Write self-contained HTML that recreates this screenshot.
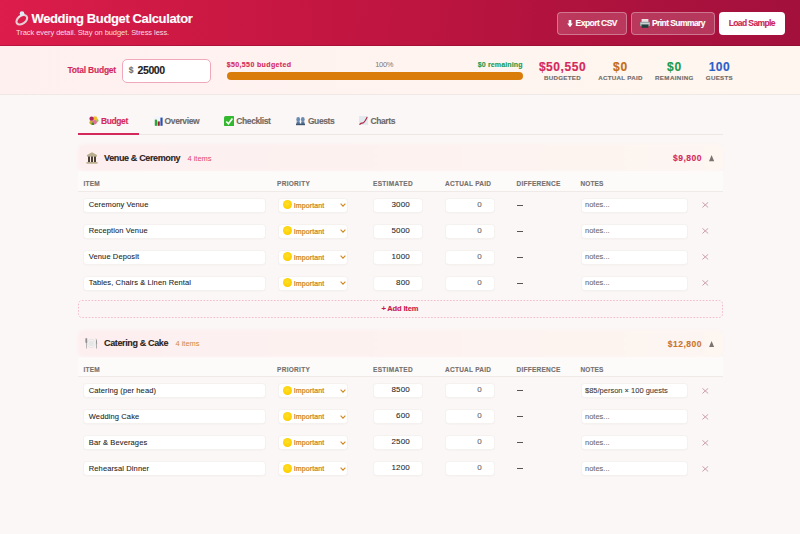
<!DOCTYPE html>
<html><head><meta charset="utf-8"><title>Wedding Budget Calculator</title>
<style>
html,body{margin:0;padding:0;}
body{width:800px;height:534px;overflow:hidden;position:relative;background:#fbf7f6;font-family:"Liberation Sans", sans-serif;}
.t{position:absolute;line-height:1;white-space:nowrap;}
.b{-webkit-text-stroke:0.12px currentColor;}
svg{display:block}
</style></head><body>
<div style="position:absolute;left:0.00px;top:0.00px;width:800.00px;height:46.00px;box-sizing:border-box;background:linear-gradient(95deg,#dd1d4b 0%,#cd1944 22%,#bf1540 48%,#b0133e 70%,#a3103c 100%);box-shadow:inset 0 -1px 0 rgba(120,10,40,0.35);"></div>
<svg style="position:absolute;left:14px;top:10px" width="16" height="16" viewBox="0 0 16 16">
<ellipse cx="7.8" cy="9.8" rx="6" ry="3.9" fill="none" stroke="#e6cdd4" stroke-width="2.1" transform="rotate(-36 7.8 9.8)"/>
<path d="M4.6 7.2 Q7 4.8 10.6 4.4" fill="none" stroke="#f5e4e8" stroke-width="1.2"/>
<circle cx="8" cy="3.6" r="2.3" fill="#dcecf6"/>
</svg>
<div class="t b" style="left:31.50px;top:12.00px;font-size:13px;font-weight:bold;color:#fff;letter-spacing:-0.37px;">Wedding Budget Calculator</div>
<div class="t" style="left:16.00px;top:28.65px;font-size:7.5px;font-weight:normal;color:rgba(255,255,255,0.85);letter-spacing:-0.07px;">Track every detail. Stay on budget. Stress less.</div>
<div style="position:absolute;left:557.00px;top:12.00px;width:70.00px;height:23.00px;box-sizing:border-box;background:rgba(255,255,255,0.16);border:1px solid rgba(255,255,255,0.32);border-radius:4px;"></div>
<svg style="position:absolute;left:566.5px;top:19.6px" width="6" height="7.4" viewBox="0 0 6 7.4"><rect x="1.7" y="0" width="2.6" height="4" fill="#fff"/><path d="M0.2 3.6 H5.8 L3 7.3 Z" fill="#fff"/></svg>
<div class="t b" style="left:575.60px;top:19.10px;font-size:8.5px;font-weight:bold;color:#fff;letter-spacing:-0.54px;">Export CSV</div>
<div style="position:absolute;left:631.00px;top:12.00px;width:84.00px;height:23.00px;box-sizing:border-box;background:rgba(255,255,255,0.16);border:1px solid rgba(255,255,255,0.32);border-radius:4px;"></div>
<svg style="position:absolute;left:640.3px;top:18.6px" width="10" height="9" viewBox="0 0 10 9"><rect x="1.6" y="0" width="6.8" height="3.6" fill="#eedfe3"/><rect x="0" y="2.8" width="10" height="4.4" rx="1" fill="#9aa6a6"/><rect x="0.6" y="4.2" width="8.8" height="0.9" fill="#d6dcdc"/><rect x="1.6" y="5.6" width="6.8" height="3.2" fill="#233c3c"/></svg>
<div class="t b" style="left:652.00px;top:19.10px;font-size:8.5px;font-weight:bold;color:#fff;letter-spacing:-0.575px;">Print Summary</div>
<div style="position:absolute;left:719.00px;top:12.00px;width:65.50px;height:22.50px;box-sizing:border-box;background:#fff;border-radius:4px;"></div>
<div class="t b" style="left:728.70px;top:19.10px;font-size:8.5px;font-weight:bold;color:#cc2456;letter-spacing:-0.6px;">Load Sample</div>
<div style="position:absolute;left:0.00px;top:46.00px;width:800.00px;height:49.00px;box-sizing:border-box;background:linear-gradient(90deg,#fff0f0 0%,#fff4f0 50%,#fff7ef 100%);border-bottom:1px solid #f0e8e5;"></div>
<div class="t b" style="left:67.40px;top:66.40px;font-size:8.5px;font-weight:bold;color:#d42a5b;letter-spacing:-0.23px;">Total Budget</div>
<div style="position:absolute;left:122.40px;top:58.50px;width:88.30px;height:24.30px;box-sizing:border-box;background:#fff;border:1px solid #efa9bb;border-radius:5px;"></div>
<div class="t b" style="left:128.80px;top:66.40px;font-size:8.5px;font-weight:bold;color:#707070;letter-spacing:0px;">$</div>
<div class="t b" style="left:137.60px;top:64.71px;font-size:10.5px;font-weight:bold;color:#222;letter-spacing:-0.44px;">25000</div>
<div class="t b" style="left:226.75px;top:61.47px;font-size:7px;font-weight:bold;color:#d42a5b;letter-spacing:0.37px;">$50,550 budgeted</div>
<div class="t" style="left:184.20px;width:400px;text-align:center;top:61.15px;font-size:7.5px;font-weight:normal;color:#7a7a7a;letter-spacing:-0.35px;">100%</div>
<div class="t b" style="right:277.30px;top:61.47px;font-size:7px;font-weight:bold;color:#1c9a4c;letter-spacing:0.15px;">$0 remaining</div>
<div style="position:absolute;left:227.00px;top:72.10px;width:295.50px;height:7.70px;box-sizing:border-box;background:#da7c0a;border-radius:4px;"></div>
<div class="t b" style="left:362.50px;width:400px;text-align:center;top:61.24px;font-size:12px;font-weight:bold;color:#d42a5b;letter-spacing:0.55px;-webkit-text-stroke:0.15px #d42a5b;">$50,550</div>
<div class="t b" style="left:362.50px;width:400px;text-align:center;top:74.75px;font-size:6.2px;font-weight:bold;color:#6f6b69;letter-spacing:0.3px;">BUDGETED</div>
<div class="t b" style="left:420.50px;width:400px;text-align:center;top:61.24px;font-size:12px;font-weight:bold;color:#c46c12;letter-spacing:0.8px;-webkit-text-stroke:0.15px #c46c12;">$0</div>
<div class="t b" style="left:420.50px;width:400px;text-align:center;top:74.75px;font-size:6.2px;font-weight:bold;color:#6f6b69;letter-spacing:0.28px;">ACTUAL PAID</div>
<div class="t b" style="left:474.40px;width:400px;text-align:center;top:61.24px;font-size:12px;font-weight:bold;color:#1c9a4c;letter-spacing:0.8px;-webkit-text-stroke:0.15px #1c9a4c;">$0</div>
<div class="t b" style="left:474.40px;width:400px;text-align:center;top:74.75px;font-size:6.2px;font-weight:bold;color:#6f6b69;letter-spacing:0.37px;">REMAINING</div>
<div class="t b" style="left:519.40px;width:400px;text-align:center;top:61.24px;font-size:12px;font-weight:bold;color:#2c5fc8;letter-spacing:0.35px;-webkit-text-stroke:0.15px #2c5fc8;">100</div>
<div class="t b" style="left:519.40px;width:400px;text-align:center;top:74.75px;font-size:6.2px;font-weight:bold;color:#6f6b69;letter-spacing:0.3px;">GUESTS</div>
<div style="position:absolute;left:78.00px;top:134.00px;width:644.50px;height:1.00px;box-sizing:border-box;background:#ede7e5;"></div>
<div style="position:absolute;left:78.00px;top:133.00px;width:61.00px;height:2.00px;box-sizing:border-box;background:#d42a5b;"></div>
<div class="t b" style="left:101.00px;top:116.80px;font-size:8.5px;font-weight:bold;color:#d42a5b;letter-spacing:-0.4px;">Budget</div>
<div class="t b" style="left:164.60px;top:116.80px;font-size:8.5px;font-weight:bold;color:#6f6a68;letter-spacing:-0.4px;">Overview</div>
<div class="t b" style="left:236.30px;top:116.80px;font-size:8.5px;font-weight:bold;color:#6f6a68;letter-spacing:-0.4px;">Checklist</div>
<div class="t b" style="left:307.90px;top:116.80px;font-size:8.5px;font-weight:bold;color:#6f6a68;letter-spacing:-0.4px;">Guests</div>
<div class="t b" style="left:370.50px;top:116.80px;font-size:8.5px;font-weight:bold;color:#6f6a68;letter-spacing:-0.4px;">Charts</div>
<svg style="position:absolute;left:89px;top:115.5px" width="9.5" height="9.5" viewBox="0 0 9.5 9.5"><circle cx="7.6" cy="4.6" r="1.9" fill="#9ccc50"/><circle cx="6" cy="2.6" r="2.3" fill="#f0c030"/><circle cx="2.6" cy="2.8" r="2.2" fill="#b02860"/><circle cx="2.4" cy="6.4" r="2" fill="#c8b030"/><circle cx="5.6" cy="6.2" r="2.2" fill="#e070a0"/><circle cx="3.8" cy="8" r="1.4" fill="#4a8a2a"/></svg>
<svg style="position:absolute;left:153.6px;top:116px" width="9" height="10" viewBox="0 0 9 10"><rect x="0" y="0.5" width="9" height="9.5" fill="#f3f5fa"/><rect x="0.8" y="3.6" width="2.2" height="6.2" fill="#2aa83a"/><rect x="3.6" y="5.4" width="2.2" height="4.4" fill="#a02030"/><rect x="6.4" y="1.6" width="2.2" height="8.2" fill="#2c50b0"/></svg>
<svg style="position:absolute;left:223.7px;top:115.6px" width="10.5" height="10.5" viewBox="0 0 10 10"><rect x="0" y="0" width="10" height="10" rx="1.6" fill="#34b830"/><path d="M2.2 5.2 L4.2 7.4 L8 2.4" fill="none" stroke="#fff" stroke-width="1.5"/></svg>
<svg style="position:absolute;left:295.9px;top:117.4px" width="9" height="8.2" viewBox="0 0 9 8.2"><ellipse cx="2.2" cy="2.6" rx="1.9" ry="2.5" fill="#6a8cb2"/><ellipse cx="6.8" cy="2.6" rx="1.9" ry="2.5" fill="#6a8cb2"/><rect x="0.6" y="4.6" width="3.2" height="3" fill="#5a7ca2"/><rect x="5.2" y="4.6" width="3.2" height="3" fill="#5a7ca2"/><rect x="0" y="6.6" width="9" height="1.6" fill="#3c5470"/></svg>
<svg style="position:absolute;left:358.9px;top:115.9px" width="9" height="9.6" viewBox="0 0 9 9.6"><rect x="0" y="0" width="9" height="9.6" fill="#e2e9ef"/><path d="M0.5 8.6 Q1.5 7 4.2 6.9 Q5.6 6.4 8.2 1" fill="none" stroke="#b02a40" stroke-width="1.1"/></svg>
<div style="position:absolute;left:78.00px;top:144.00px;width:644.50px;height:27.00px;box-sizing:border-box;background:linear-gradient(90deg,#fdeff0 0%,#fdf2f0 50%,#fdf6f1 100%);border-radius:6px;filter:blur(1px);"></div>
<svg style="position:absolute;left:85.8px;top:151.80px" width="12" height="12" viewBox="0 0 12 12"><path d="M6 0.3 L11.5 3.3 H0.5 Z" fill="#b9ad8c"/><rect x="1" y="3.3" width="10" height="1.2" fill="#a89c7c"/><rect x="2" y="4.5" width="2" height="5.5" fill="#4a3f30"/><rect x="5" y="4.5" width="2" height="5.5" fill="#4a3f30"/><rect x="8" y="4.5" width="2" height="5.5" fill="#4a3f30"/><rect x="0.5" y="10" width="11" height="1.7" fill="#b9ad8c"/></svg>
<div class="t b" style="left:104.00px;top:153.98px;font-size:9px;font-weight:bold;color:#2b2424;letter-spacing:-0.36px;">Venue &amp; Ceremony</div>
<div class="t" style="left:187.40px;top:154.65px;font-size:7.5px;font-weight:normal;color:#e0466e;letter-spacing:0px;">4 items</div>
<div class="t b" style="right:98.00px;top:154.20px;font-size:8.5px;font-weight:bold;color:#d42a5b;letter-spacing:0.5px;-webkit-text-stroke:0.1px #d42a5b;">$9,800</div>
<svg style="position:absolute;left:709.4px;top:155.40px" width="5.2" height="6.2" viewBox="0 0 5.2 6.2"><path d="M2.6 0 L5.2 6.2 H0 Z" fill="#7a7470"/></svg>
<div style="position:absolute;left:78.00px;top:171.00px;width:644.50px;height:20.50px;box-sizing:border-box;background:rgba(255,255,255,0.45);border-bottom:1px solid #efe9e7;"></div>
<div class="t b" style="left:83.60px;top:181.00px;font-size:6.5px;font-weight:bold;color:#75716f;letter-spacing:0.22px;">ITEM</div>
<div class="t b" style="left:277.00px;top:181.00px;font-size:6.5px;font-weight:bold;color:#75716f;letter-spacing:0.3px;">PRIORITY</div>
<div class="t b" style="left:373.00px;top:181.00px;font-size:6.5px;font-weight:bold;color:#75716f;letter-spacing:0.32px;">ESTIMATED</div>
<div class="t b" style="left:445.00px;top:181.00px;font-size:6.5px;font-weight:bold;color:#75716f;letter-spacing:0.26px;">ACTUAL PAID</div>
<div class="t b" style="left:516.50px;top:181.00px;font-size:6.5px;font-weight:bold;color:#75716f;letter-spacing:0.25px;">DIFFERENCE</div>
<div class="t b" style="left:580.40px;top:181.00px;font-size:6.5px;font-weight:bold;color:#75716f;letter-spacing:0.12px;">NOTES</div>
<div style="position:absolute;left:83.20px;top:197.60px;width:182.80px;height:15.20px;box-sizing:border-box;background:#fff;border:1px solid #f5f1ef;border-radius:3.5px;box-shadow:0 0.5px 0 rgba(0,0,0,0.03);"></div>
<div class="t" style="left:88.80px;top:201.25px;font-size:7.5px;font-weight:normal;color:#1e1e1e;letter-spacing:0.12px;-webkit-text-stroke:0.08px #1e1e1e;">Ceremony Venue</div>
<div style="position:absolute;left:277.60px;top:197.60px;width:70.00px;height:15.20px;box-sizing:border-box;background:#fff;border:1px solid #f5f1ef;border-radius:3.5px;box-shadow:0 0.5px 0 rgba(0,0,0,0.03);"></div>
<div style="position:absolute;left:282.7px;top:200.10px;width:9px;height:9px;border-radius:50%;background:radial-gradient(circle at 45% 40%,#ffde2a,#ffd000 65%,#eab000)"></div>
<div class="t" style="left:293.70px;top:201.67px;font-size:7px;font-weight:normal;color:#c97f14;letter-spacing:0.12px;-webkit-text-stroke:0.2px #c97f14;">Important</div>
<svg style="position:absolute;left:340px;top:203.00px" width="6" height="4" viewBox="0 0 6 4"><path d="M0.6 0.6 L3 3.2 L5.4 0.6" fill="none" stroke="#d08a20" stroke-width="1.1"/></svg>
<div style="position:absolute;left:373.40px;top:197.60px;width:49.40px;height:15.20px;box-sizing:border-box;background:#fff;border:1px solid #f5f1ef;border-radius:3.5px;box-shadow:0 0.5px 0 rgba(0,0,0,0.03);"></div>
<div class="t" style="right:390.00px;top:200.83px;font-size:8px;font-weight:normal;color:#262626;letter-spacing:0.18px;-webkit-text-stroke:0.06px #262626;">3000</div>
<div style="position:absolute;left:445.00px;top:197.60px;width:50.00px;height:15.20px;box-sizing:border-box;background:#fff;border:1px solid #f5f1ef;border-radius:3.5px;box-shadow:0 0.5px 0 rgba(0,0,0,0.03);"></div>
<div class="t" style="right:318.20px;top:200.83px;font-size:8px;font-weight:normal;color:#6c6c6c;letter-spacing:0px;-webkit-text-stroke:0.12px #6c6c6c;">0</div>
<div style="position:absolute;left:516.50px;top:204.60px;width:6.80px;height:1.00px;box-sizing:border-box;background:#555;"></div>
<div style="position:absolute;left:580.80px;top:197.60px;width:107.20px;height:15.20px;box-sizing:border-box;background:#fff;border:1px solid #f5f1ef;border-radius:3.5px;box-shadow:0 0.5px 0 rgba(0,0,0,0.03);"></div>
<div class="t" style="left:585.00px;top:201.25px;font-size:7.5px;font-weight:normal;color:#6e6a69;letter-spacing:0px;-webkit-text-stroke:0.08px #6e6a69;">notes...</div>
<svg style="position:absolute;left:702.4px;top:202.40px" width="6.6" height="5.8" viewBox="0 0 6.6 5.8"><path d="M0.4 0.3 L6.2 5.5 M6.2 0.3 L0.4 5.5" stroke="#cc9fac" stroke-width="1"/></svg>
<div style="position:absolute;left:83.20px;top:223.60px;width:182.80px;height:15.20px;box-sizing:border-box;background:#fff;border:1px solid #f5f1ef;border-radius:3.5px;box-shadow:0 0.5px 0 rgba(0,0,0,0.03);"></div>
<div class="t" style="left:88.80px;top:227.25px;font-size:7.5px;font-weight:normal;color:#1e1e1e;letter-spacing:0.12px;-webkit-text-stroke:0.08px #1e1e1e;">Reception Venue</div>
<div style="position:absolute;left:277.60px;top:223.60px;width:70.00px;height:15.20px;box-sizing:border-box;background:#fff;border:1px solid #f5f1ef;border-radius:3.5px;box-shadow:0 0.5px 0 rgba(0,0,0,0.03);"></div>
<div style="position:absolute;left:282.7px;top:226.10px;width:9px;height:9px;border-radius:50%;background:radial-gradient(circle at 45% 40%,#ffde2a,#ffd000 65%,#eab000)"></div>
<div class="t" style="left:293.70px;top:227.67px;font-size:7px;font-weight:normal;color:#c97f14;letter-spacing:0.12px;-webkit-text-stroke:0.2px #c97f14;">Important</div>
<svg style="position:absolute;left:340px;top:229.00px" width="6" height="4" viewBox="0 0 6 4"><path d="M0.6 0.6 L3 3.2 L5.4 0.6" fill="none" stroke="#d08a20" stroke-width="1.1"/></svg>
<div style="position:absolute;left:373.40px;top:223.60px;width:49.40px;height:15.20px;box-sizing:border-box;background:#fff;border:1px solid #f5f1ef;border-radius:3.5px;box-shadow:0 0.5px 0 rgba(0,0,0,0.03);"></div>
<div class="t" style="right:390.00px;top:226.83px;font-size:8px;font-weight:normal;color:#262626;letter-spacing:0.18px;-webkit-text-stroke:0.06px #262626;">5000</div>
<div style="position:absolute;left:445.00px;top:223.60px;width:50.00px;height:15.20px;box-sizing:border-box;background:#fff;border:1px solid #f5f1ef;border-radius:3.5px;box-shadow:0 0.5px 0 rgba(0,0,0,0.03);"></div>
<div class="t" style="right:318.20px;top:226.83px;font-size:8px;font-weight:normal;color:#6c6c6c;letter-spacing:0px;-webkit-text-stroke:0.12px #6c6c6c;">0</div>
<div style="position:absolute;left:516.50px;top:230.60px;width:6.80px;height:1.00px;box-sizing:border-box;background:#555;"></div>
<div style="position:absolute;left:580.80px;top:223.60px;width:107.20px;height:15.20px;box-sizing:border-box;background:#fff;border:1px solid #f5f1ef;border-radius:3.5px;box-shadow:0 0.5px 0 rgba(0,0,0,0.03);"></div>
<div class="t" style="left:585.00px;top:227.25px;font-size:7.5px;font-weight:normal;color:#6e6a69;letter-spacing:0px;-webkit-text-stroke:0.08px #6e6a69;">notes...</div>
<svg style="position:absolute;left:702.4px;top:228.40px" width="6.6" height="5.8" viewBox="0 0 6.6 5.8"><path d="M0.4 0.3 L6.2 5.5 M6.2 0.3 L0.4 5.5" stroke="#cc9fac" stroke-width="1"/></svg>
<div style="position:absolute;left:83.20px;top:249.60px;width:182.80px;height:15.20px;box-sizing:border-box;background:#fff;border:1px solid #f5f1ef;border-radius:3.5px;box-shadow:0 0.5px 0 rgba(0,0,0,0.03);"></div>
<div class="t" style="left:88.80px;top:253.25px;font-size:7.5px;font-weight:normal;color:#1e1e1e;letter-spacing:0.12px;-webkit-text-stroke:0.08px #1e1e1e;">Venue Deposit</div>
<div style="position:absolute;left:277.60px;top:249.60px;width:70.00px;height:15.20px;box-sizing:border-box;background:#fff;border:1px solid #f5f1ef;border-radius:3.5px;box-shadow:0 0.5px 0 rgba(0,0,0,0.03);"></div>
<div style="position:absolute;left:282.7px;top:252.10px;width:9px;height:9px;border-radius:50%;background:radial-gradient(circle at 45% 40%,#ffde2a,#ffd000 65%,#eab000)"></div>
<div class="t" style="left:293.70px;top:253.67px;font-size:7px;font-weight:normal;color:#c97f14;letter-spacing:0.12px;-webkit-text-stroke:0.2px #c97f14;">Important</div>
<svg style="position:absolute;left:340px;top:255.00px" width="6" height="4" viewBox="0 0 6 4"><path d="M0.6 0.6 L3 3.2 L5.4 0.6" fill="none" stroke="#d08a20" stroke-width="1.1"/></svg>
<div style="position:absolute;left:373.40px;top:249.60px;width:49.40px;height:15.20px;box-sizing:border-box;background:#fff;border:1px solid #f5f1ef;border-radius:3.5px;box-shadow:0 0.5px 0 rgba(0,0,0,0.03);"></div>
<div class="t" style="right:390.00px;top:252.83px;font-size:8px;font-weight:normal;color:#262626;letter-spacing:0.18px;-webkit-text-stroke:0.06px #262626;">1000</div>
<div style="position:absolute;left:445.00px;top:249.60px;width:50.00px;height:15.20px;box-sizing:border-box;background:#fff;border:1px solid #f5f1ef;border-radius:3.5px;box-shadow:0 0.5px 0 rgba(0,0,0,0.03);"></div>
<div class="t" style="right:318.20px;top:252.83px;font-size:8px;font-weight:normal;color:#6c6c6c;letter-spacing:0px;-webkit-text-stroke:0.12px #6c6c6c;">0</div>
<div style="position:absolute;left:516.50px;top:256.60px;width:6.80px;height:1.00px;box-sizing:border-box;background:#555;"></div>
<div style="position:absolute;left:580.80px;top:249.60px;width:107.20px;height:15.20px;box-sizing:border-box;background:#fff;border:1px solid #f5f1ef;border-radius:3.5px;box-shadow:0 0.5px 0 rgba(0,0,0,0.03);"></div>
<div class="t" style="left:585.00px;top:253.25px;font-size:7.5px;font-weight:normal;color:#6e6a69;letter-spacing:0px;-webkit-text-stroke:0.08px #6e6a69;">notes...</div>
<svg style="position:absolute;left:702.4px;top:254.40px" width="6.6" height="5.8" viewBox="0 0 6.6 5.8"><path d="M0.4 0.3 L6.2 5.5 M6.2 0.3 L0.4 5.5" stroke="#cc9fac" stroke-width="1"/></svg>
<div style="position:absolute;left:83.20px;top:275.60px;width:182.80px;height:15.20px;box-sizing:border-box;background:#fff;border:1px solid #f5f1ef;border-radius:3.5px;box-shadow:0 0.5px 0 rgba(0,0,0,0.03);"></div>
<div class="t" style="left:88.80px;top:279.25px;font-size:7.5px;font-weight:normal;color:#1e1e1e;letter-spacing:0.12px;-webkit-text-stroke:0.08px #1e1e1e;">Tables, Chairs &amp; Linen Rental</div>
<div style="position:absolute;left:277.60px;top:275.60px;width:70.00px;height:15.20px;box-sizing:border-box;background:#fff;border:1px solid #f5f1ef;border-radius:3.5px;box-shadow:0 0.5px 0 rgba(0,0,0,0.03);"></div>
<div style="position:absolute;left:282.7px;top:278.10px;width:9px;height:9px;border-radius:50%;background:radial-gradient(circle at 45% 40%,#ffde2a,#ffd000 65%,#eab000)"></div>
<div class="t" style="left:293.70px;top:279.67px;font-size:7px;font-weight:normal;color:#c97f14;letter-spacing:0.12px;-webkit-text-stroke:0.2px #c97f14;">Important</div>
<svg style="position:absolute;left:340px;top:281.00px" width="6" height="4" viewBox="0 0 6 4"><path d="M0.6 0.6 L3 3.2 L5.4 0.6" fill="none" stroke="#d08a20" stroke-width="1.1"/></svg>
<div style="position:absolute;left:373.40px;top:275.60px;width:49.40px;height:15.20px;box-sizing:border-box;background:#fff;border:1px solid #f5f1ef;border-radius:3.5px;box-shadow:0 0.5px 0 rgba(0,0,0,0.03);"></div>
<div class="t" style="right:390.00px;top:278.83px;font-size:8px;font-weight:normal;color:#262626;letter-spacing:0.18px;-webkit-text-stroke:0.06px #262626;">800</div>
<div style="position:absolute;left:445.00px;top:275.60px;width:50.00px;height:15.20px;box-sizing:border-box;background:#fff;border:1px solid #f5f1ef;border-radius:3.5px;box-shadow:0 0.5px 0 rgba(0,0,0,0.03);"></div>
<div class="t" style="right:318.20px;top:278.83px;font-size:8px;font-weight:normal;color:#6c6c6c;letter-spacing:0px;-webkit-text-stroke:0.12px #6c6c6c;">0</div>
<div style="position:absolute;left:516.50px;top:282.60px;width:6.80px;height:1.00px;box-sizing:border-box;background:#555;"></div>
<div style="position:absolute;left:580.80px;top:275.60px;width:107.20px;height:15.20px;box-sizing:border-box;background:#fff;border:1px solid #f5f1ef;border-radius:3.5px;box-shadow:0 0.5px 0 rgba(0,0,0,0.03);"></div>
<div class="t" style="left:585.00px;top:279.25px;font-size:7.5px;font-weight:normal;color:#6e6a69;letter-spacing:0px;-webkit-text-stroke:0.08px #6e6a69;">notes...</div>
<svg style="position:absolute;left:702.4px;top:280.40px" width="6.6" height="5.8" viewBox="0 0 6.6 5.8"><path d="M0.4 0.3 L6.2 5.5 M6.2 0.3 L0.4 5.5" stroke="#cc9fac" stroke-width="1"/></svg>
<svg style="position:absolute;left:78px;top:300.00px" width="645" height="18" viewBox="0 0 645 18"><rect x="0.5" y="0.5" width="644" height="17" rx="3.5" fill="rgba(255,240,243,0.25)" stroke="#f3bccb" stroke-width="1" stroke-dasharray="1.6 1.6"/></svg>
<div class="t b" style="left:381.50px;top:305.15px;font-size:7.5px;font-weight:bold;color:#c8184a;letter-spacing:-0.16px;">+ Add Item</div>
<div style="position:absolute;left:78.00px;top:329.50px;width:644.50px;height:27.00px;box-sizing:border-box;background:linear-gradient(90deg,#fdeff0 0%,#fdf2f0 50%,#fdf6f1 100%);border-radius:6px;filter:blur(1px);"></div>
<svg style="position:absolute;left:85.4px;top:337.70px" width="12.6" height="11" viewBox="0 0 12.6 11"><circle cx="6.3" cy="5.5" r="4.2" fill="#f2f2f2" stroke="#d8d8d8" stroke-width="0.5"/><circle cx="6.3" cy="5.5" r="2.8" fill="#e6e6e6"/><path d="M0.4 0.3 H2.2 V4.5 L1.6 5 V10.6 H1 V5 L0.4 4.5 Z" fill="#8e8e8e"/><path d="M10.8 0.3 Q12.4 2 12.2 5.5 L11.9 6 V10.6 H11.2 V6 Z" fill="#8e8e8e"/></svg>
<div class="t b" style="left:104.00px;top:339.48px;font-size:9px;font-weight:bold;color:#2b2424;letter-spacing:-0.36px;">Catering &amp; Cake</div>
<div class="t" style="left:175.40px;top:340.15px;font-size:7.5px;font-weight:normal;color:#d08a3a;letter-spacing:0px;">4 items</div>
<div class="t b" style="right:98.00px;top:339.70px;font-size:8.5px;font-weight:bold;color:#c8742a;letter-spacing:0.5px;-webkit-text-stroke:0.1px #c8742a;">$12,800</div>
<svg style="position:absolute;left:709.4px;top:340.90px" width="5.2" height="6.2" viewBox="0 0 5.2 6.2"><path d="M2.6 0 L5.2 6.2 H0 Z" fill="#7a7470"/></svg>
<div style="position:absolute;left:78.00px;top:356.50px;width:644.50px;height:20.50px;box-sizing:border-box;background:rgba(255,255,255,0.45);border-bottom:1px solid #efe9e7;"></div>
<div class="t b" style="left:83.60px;top:366.50px;font-size:6.5px;font-weight:bold;color:#75716f;letter-spacing:0.22px;">ITEM</div>
<div class="t b" style="left:277.00px;top:366.50px;font-size:6.5px;font-weight:bold;color:#75716f;letter-spacing:0.3px;">PRIORITY</div>
<div class="t b" style="left:373.00px;top:366.50px;font-size:6.5px;font-weight:bold;color:#75716f;letter-spacing:0.32px;">ESTIMATED</div>
<div class="t b" style="left:445.00px;top:366.50px;font-size:6.5px;font-weight:bold;color:#75716f;letter-spacing:0.26px;">ACTUAL PAID</div>
<div class="t b" style="left:516.50px;top:366.50px;font-size:6.5px;font-weight:bold;color:#75716f;letter-spacing:0.25px;">DIFFERENCE</div>
<div class="t b" style="left:580.40px;top:366.50px;font-size:6.5px;font-weight:bold;color:#75716f;letter-spacing:0.12px;">NOTES</div>
<div style="position:absolute;left:83.20px;top:383.10px;width:182.80px;height:15.20px;box-sizing:border-box;background:#fff;border:1px solid #f5f1ef;border-radius:3.5px;box-shadow:0 0.5px 0 rgba(0,0,0,0.03);"></div>
<div class="t" style="left:88.80px;top:386.75px;font-size:7.5px;font-weight:normal;color:#1e1e1e;letter-spacing:0.12px;-webkit-text-stroke:0.08px #1e1e1e;">Catering (per head)</div>
<div style="position:absolute;left:277.60px;top:383.10px;width:70.00px;height:15.20px;box-sizing:border-box;background:#fff;border:1px solid #f5f1ef;border-radius:3.5px;box-shadow:0 0.5px 0 rgba(0,0,0,0.03);"></div>
<div style="position:absolute;left:282.7px;top:385.60px;width:9px;height:9px;border-radius:50%;background:radial-gradient(circle at 45% 40%,#ffde2a,#ffd000 65%,#eab000)"></div>
<div class="t" style="left:293.70px;top:387.17px;font-size:7px;font-weight:normal;color:#c97f14;letter-spacing:0.12px;-webkit-text-stroke:0.2px #c97f14;">Important</div>
<svg style="position:absolute;left:340px;top:388.50px" width="6" height="4" viewBox="0 0 6 4"><path d="M0.6 0.6 L3 3.2 L5.4 0.6" fill="none" stroke="#d08a20" stroke-width="1.1"/></svg>
<div style="position:absolute;left:373.40px;top:383.10px;width:49.40px;height:15.20px;box-sizing:border-box;background:#fff;border:1px solid #f5f1ef;border-radius:3.5px;box-shadow:0 0.5px 0 rgba(0,0,0,0.03);"></div>
<div class="t" style="right:390.00px;top:386.33px;font-size:8px;font-weight:normal;color:#262626;letter-spacing:0.18px;-webkit-text-stroke:0.06px #262626;">8500</div>
<div style="position:absolute;left:445.00px;top:383.10px;width:50.00px;height:15.20px;box-sizing:border-box;background:#fff;border:1px solid #f5f1ef;border-radius:3.5px;box-shadow:0 0.5px 0 rgba(0,0,0,0.03);"></div>
<div class="t" style="right:318.20px;top:386.33px;font-size:8px;font-weight:normal;color:#6c6c6c;letter-spacing:0px;-webkit-text-stroke:0.12px #6c6c6c;">0</div>
<div style="position:absolute;left:516.50px;top:390.10px;width:6.80px;height:1.00px;box-sizing:border-box;background:#555;"></div>
<div style="position:absolute;left:580.80px;top:383.10px;width:107.20px;height:15.20px;box-sizing:border-box;background:#fff;border:1px solid #f5f1ef;border-radius:3.5px;box-shadow:0 0.5px 0 rgba(0,0,0,0.03);"></div>
<div class="t" style="left:585.00px;top:386.75px;font-size:7.5px;font-weight:normal;color:#3a3a3a;letter-spacing:0px;-webkit-text-stroke:0.08px #3a3a3a;">$85/person × 100 guests</div>
<svg style="position:absolute;left:702.4px;top:387.90px" width="6.6" height="5.8" viewBox="0 0 6.6 5.8"><path d="M0.4 0.3 L6.2 5.5 M6.2 0.3 L0.4 5.5" stroke="#cc9fac" stroke-width="1"/></svg>
<div style="position:absolute;left:83.20px;top:409.10px;width:182.80px;height:15.20px;box-sizing:border-box;background:#fff;border:1px solid #f5f1ef;border-radius:3.5px;box-shadow:0 0.5px 0 rgba(0,0,0,0.03);"></div>
<div class="t" style="left:88.80px;top:412.75px;font-size:7.5px;font-weight:normal;color:#1e1e1e;letter-spacing:0.12px;-webkit-text-stroke:0.08px #1e1e1e;">Wedding Cake</div>
<div style="position:absolute;left:277.60px;top:409.10px;width:70.00px;height:15.20px;box-sizing:border-box;background:#fff;border:1px solid #f5f1ef;border-radius:3.5px;box-shadow:0 0.5px 0 rgba(0,0,0,0.03);"></div>
<div style="position:absolute;left:282.7px;top:411.60px;width:9px;height:9px;border-radius:50%;background:radial-gradient(circle at 45% 40%,#ffde2a,#ffd000 65%,#eab000)"></div>
<div class="t" style="left:293.70px;top:413.17px;font-size:7px;font-weight:normal;color:#c97f14;letter-spacing:0.12px;-webkit-text-stroke:0.2px #c97f14;">Important</div>
<svg style="position:absolute;left:340px;top:414.50px" width="6" height="4" viewBox="0 0 6 4"><path d="M0.6 0.6 L3 3.2 L5.4 0.6" fill="none" stroke="#d08a20" stroke-width="1.1"/></svg>
<div style="position:absolute;left:373.40px;top:409.10px;width:49.40px;height:15.20px;box-sizing:border-box;background:#fff;border:1px solid #f5f1ef;border-radius:3.5px;box-shadow:0 0.5px 0 rgba(0,0,0,0.03);"></div>
<div class="t" style="right:390.00px;top:412.33px;font-size:8px;font-weight:normal;color:#262626;letter-spacing:0.18px;-webkit-text-stroke:0.06px #262626;">600</div>
<div style="position:absolute;left:445.00px;top:409.10px;width:50.00px;height:15.20px;box-sizing:border-box;background:#fff;border:1px solid #f5f1ef;border-radius:3.5px;box-shadow:0 0.5px 0 rgba(0,0,0,0.03);"></div>
<div class="t" style="right:318.20px;top:412.33px;font-size:8px;font-weight:normal;color:#6c6c6c;letter-spacing:0px;-webkit-text-stroke:0.12px #6c6c6c;">0</div>
<div style="position:absolute;left:516.50px;top:416.10px;width:6.80px;height:1.00px;box-sizing:border-box;background:#555;"></div>
<div style="position:absolute;left:580.80px;top:409.10px;width:107.20px;height:15.20px;box-sizing:border-box;background:#fff;border:1px solid #f5f1ef;border-radius:3.5px;box-shadow:0 0.5px 0 rgba(0,0,0,0.03);"></div>
<div class="t" style="left:585.00px;top:412.75px;font-size:7.5px;font-weight:normal;color:#6e6a69;letter-spacing:0px;-webkit-text-stroke:0.08px #6e6a69;">notes...</div>
<svg style="position:absolute;left:702.4px;top:413.90px" width="6.6" height="5.8" viewBox="0 0 6.6 5.8"><path d="M0.4 0.3 L6.2 5.5 M6.2 0.3 L0.4 5.5" stroke="#cc9fac" stroke-width="1"/></svg>
<div style="position:absolute;left:83.20px;top:435.10px;width:182.80px;height:15.20px;box-sizing:border-box;background:#fff;border:1px solid #f5f1ef;border-radius:3.5px;box-shadow:0 0.5px 0 rgba(0,0,0,0.03);"></div>
<div class="t" style="left:88.80px;top:438.75px;font-size:7.5px;font-weight:normal;color:#1e1e1e;letter-spacing:0.12px;-webkit-text-stroke:0.08px #1e1e1e;">Bar &amp; Beverages</div>
<div style="position:absolute;left:277.60px;top:435.10px;width:70.00px;height:15.20px;box-sizing:border-box;background:#fff;border:1px solid #f5f1ef;border-radius:3.5px;box-shadow:0 0.5px 0 rgba(0,0,0,0.03);"></div>
<div style="position:absolute;left:282.7px;top:437.60px;width:9px;height:9px;border-radius:50%;background:radial-gradient(circle at 45% 40%,#ffde2a,#ffd000 65%,#eab000)"></div>
<div class="t" style="left:293.70px;top:439.17px;font-size:7px;font-weight:normal;color:#c97f14;letter-spacing:0.12px;-webkit-text-stroke:0.2px #c97f14;">Important</div>
<svg style="position:absolute;left:340px;top:440.50px" width="6" height="4" viewBox="0 0 6 4"><path d="M0.6 0.6 L3 3.2 L5.4 0.6" fill="none" stroke="#d08a20" stroke-width="1.1"/></svg>
<div style="position:absolute;left:373.40px;top:435.10px;width:49.40px;height:15.20px;box-sizing:border-box;background:#fff;border:1px solid #f5f1ef;border-radius:3.5px;box-shadow:0 0.5px 0 rgba(0,0,0,0.03);"></div>
<div class="t" style="right:390.00px;top:438.33px;font-size:8px;font-weight:normal;color:#262626;letter-spacing:0.18px;-webkit-text-stroke:0.06px #262626;">2500</div>
<div style="position:absolute;left:445.00px;top:435.10px;width:50.00px;height:15.20px;box-sizing:border-box;background:#fff;border:1px solid #f5f1ef;border-radius:3.5px;box-shadow:0 0.5px 0 rgba(0,0,0,0.03);"></div>
<div class="t" style="right:318.20px;top:438.33px;font-size:8px;font-weight:normal;color:#6c6c6c;letter-spacing:0px;-webkit-text-stroke:0.12px #6c6c6c;">0</div>
<div style="position:absolute;left:516.50px;top:442.10px;width:6.80px;height:1.00px;box-sizing:border-box;background:#555;"></div>
<div style="position:absolute;left:580.80px;top:435.10px;width:107.20px;height:15.20px;box-sizing:border-box;background:#fff;border:1px solid #f5f1ef;border-radius:3.5px;box-shadow:0 0.5px 0 rgba(0,0,0,0.03);"></div>
<div class="t" style="left:585.00px;top:438.75px;font-size:7.5px;font-weight:normal;color:#6e6a69;letter-spacing:0px;-webkit-text-stroke:0.08px #6e6a69;">notes...</div>
<svg style="position:absolute;left:702.4px;top:439.90px" width="6.6" height="5.8" viewBox="0 0 6.6 5.8"><path d="M0.4 0.3 L6.2 5.5 M6.2 0.3 L0.4 5.5" stroke="#cc9fac" stroke-width="1"/></svg>
<div style="position:absolute;left:83.20px;top:461.10px;width:182.80px;height:15.20px;box-sizing:border-box;background:#fff;border:1px solid #f5f1ef;border-radius:3.5px;box-shadow:0 0.5px 0 rgba(0,0,0,0.03);"></div>
<div class="t" style="left:88.80px;top:464.75px;font-size:7.5px;font-weight:normal;color:#1e1e1e;letter-spacing:0.12px;-webkit-text-stroke:0.08px #1e1e1e;">Rehearsal Dinner</div>
<div style="position:absolute;left:277.60px;top:461.10px;width:70.00px;height:15.20px;box-sizing:border-box;background:#fff;border:1px solid #f5f1ef;border-radius:3.5px;box-shadow:0 0.5px 0 rgba(0,0,0,0.03);"></div>
<div style="position:absolute;left:282.7px;top:463.60px;width:9px;height:9px;border-radius:50%;background:radial-gradient(circle at 45% 40%,#ffde2a,#ffd000 65%,#eab000)"></div>
<div class="t" style="left:293.70px;top:465.17px;font-size:7px;font-weight:normal;color:#c97f14;letter-spacing:0.12px;-webkit-text-stroke:0.2px #c97f14;">Important</div>
<svg style="position:absolute;left:340px;top:466.50px" width="6" height="4" viewBox="0 0 6 4"><path d="M0.6 0.6 L3 3.2 L5.4 0.6" fill="none" stroke="#d08a20" stroke-width="1.1"/></svg>
<div style="position:absolute;left:373.40px;top:461.10px;width:49.40px;height:15.20px;box-sizing:border-box;background:#fff;border:1px solid #f5f1ef;border-radius:3.5px;box-shadow:0 0.5px 0 rgba(0,0,0,0.03);"></div>
<div class="t" style="right:390.00px;top:464.33px;font-size:8px;font-weight:normal;color:#262626;letter-spacing:0.18px;-webkit-text-stroke:0.06px #262626;">1200</div>
<div style="position:absolute;left:445.00px;top:461.10px;width:50.00px;height:15.20px;box-sizing:border-box;background:#fff;border:1px solid #f5f1ef;border-radius:3.5px;box-shadow:0 0.5px 0 rgba(0,0,0,0.03);"></div>
<div class="t" style="right:318.20px;top:464.33px;font-size:8px;font-weight:normal;color:#6c6c6c;letter-spacing:0px;-webkit-text-stroke:0.12px #6c6c6c;">0</div>
<div style="position:absolute;left:516.50px;top:468.10px;width:6.80px;height:1.00px;box-sizing:border-box;background:#555;"></div>
<div style="position:absolute;left:580.80px;top:461.10px;width:107.20px;height:15.20px;box-sizing:border-box;background:#fff;border:1px solid #f5f1ef;border-radius:3.5px;box-shadow:0 0.5px 0 rgba(0,0,0,0.03);"></div>
<div class="t" style="left:585.00px;top:464.75px;font-size:7.5px;font-weight:normal;color:#6e6a69;letter-spacing:0px;-webkit-text-stroke:0.08px #6e6a69;">notes...</div>
<svg style="position:absolute;left:702.4px;top:465.90px" width="6.6" height="5.8" viewBox="0 0 6.6 5.8"><path d="M0.4 0.3 L6.2 5.5 M6.2 0.3 L0.4 5.5" stroke="#cc9fac" stroke-width="1"/></svg>
</body></html>
